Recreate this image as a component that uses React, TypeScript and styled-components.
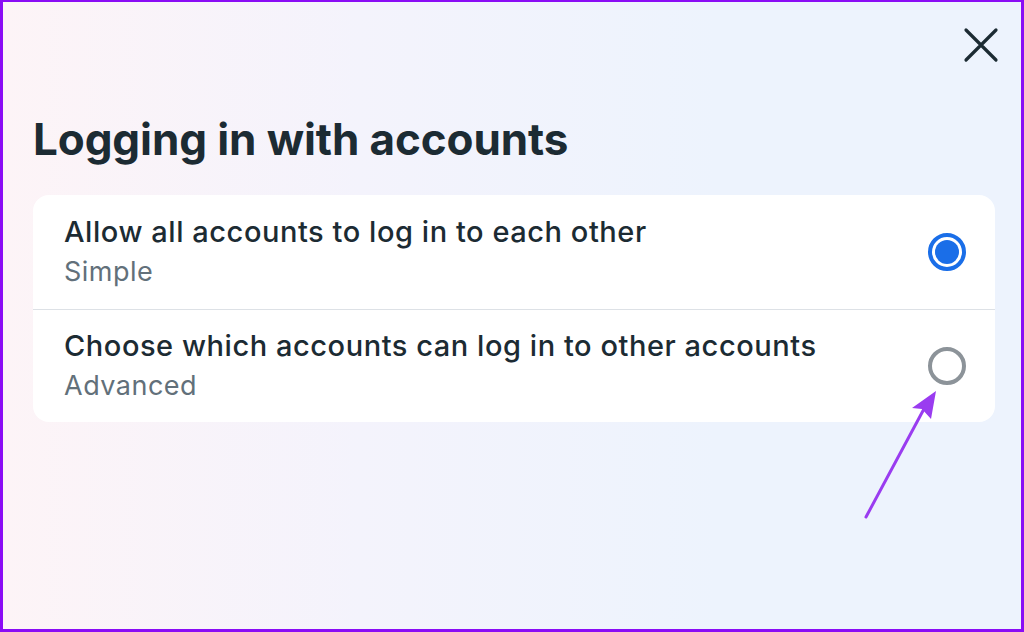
import * as React from "react";
import styled, { createGlobalStyle } from "styled-components";

const GlobalStyle = createGlobalStyle`
  html, body {
    margin: 0;
    padding: 0;
  }
  body {
    font-family: Inter, "Noto Sans", "Liberation Sans", sans-serif;
    color: #1c2b33;
  }
`;

const Frame = styled.div`
  position: relative;
  box-sizing: border-box;
  width: 1024px;
  height: 632px;
  border: 3px solid #8a0cf5;
  border-top-width: 2px;
  background: linear-gradient(90deg, #fdf4f7 0%, #f4f3fc 35%, #edf3fd 70%, #edf3fd 100%);
  padding: 0 26px 0 30px;
  overflow: hidden;
`;

const TopBar = styled.div`
  display: flex;
  justify-content: flex-end;
  height: 107px;
  padding-top: 23px;
  box-sizing: border-box;
`;

const CloseButton = styled.button`
  width: 40px;
  height: 40px;
  margin-right: -6px;
  border: none;
  background: transparent;
  padding: 0;
  display: flex;
  align-items: center;
  justify-content: center;
  cursor: pointer;
`;

const Title = styled.h1`
  margin: 0;
  font-size: 44px;
  font-weight: 700;
  line-height: 60px;
  letter-spacing: -0.1px;
  color: #1c2b33;
`;

const Card = styled.div`
  margin-top: 26px;
  background: #ffffff;
  border-radius: 16px;
  overflow: hidden;
`;

const Row = styled.div<{ $divider?: boolean }>`
  display: flex;
  align-items: center;
  justify-content: space-between;
  height: 113.5px;
  padding: 0 29px 0 31px;
  box-sizing: border-box;
  border-top: ${(p) => (p.$divider ? "1.5px solid #dde1e6" : "none")};
`;

const RowText = styled.div`
  display: flex;
  flex-direction: column;
  gap: 6px;
`;

const RowTitle = styled.div`
  font-size: 29px;
  font-weight: 500;
  line-height: 34px;
  letter-spacing: 0.55px;
  color: #1c2b33;
`;

const RowSub = styled.div`
  font-size: 27px;
  font-weight: 400;
  line-height: 34px;
  letter-spacing: 0.5px;
  color: #62707a;
`;

const Radio = styled.span<{ $checked?: boolean }>`
  box-sizing: border-box;
  width: 38px;
  height: 38px;
  border-radius: 50%;
  border: 4px solid ${(p) => (p.$checked ? "#1a6ee8" : "#8c9399")};
  display: flex;
  align-items: center;
  justify-content: center;
  &::after {
    content: "";
    width: 24px;
    height: 24px;
    border-radius: 50%;
    background: ${(p) => (p.$checked ? "#1a6ee8" : "transparent")};
  }
`;

const Arrow = styled.svg`
  position: absolute;
  left: 852px;
  top: 381px;
  width: 90px;
  height: 140px;
  pointer-events: none;
`;

const options = [
  { title: "Allow all accounts to log in to each other", sub: "Simple", checked: true },
  { title: "Choose which accounts can log in to other accounts", sub: "Advanced", checked: false },
];

export default function App() {
  return (
    <>
      <GlobalStyle />
      <Frame>
        <TopBar>
          <CloseButton aria-label="Close">
            <svg width="36" height="36" viewBox="0 0 36 36">
              <path d="M3 3 L33 33 M33 3 L3 33" stroke="#1c2b33" strokeWidth="3.2" strokeLinecap="round" />
            </svg>
          </CloseButton>
        </TopBar>
        <Title>Logging in with accounts</Title>
        <Card>
          {options.map((o, i) => (
            <Row key={o.sub} $divider={i > 0}>
              <RowText>
                <RowTitle>{o.title}</RowTitle>
                <RowSub>{o.sub}</RowSub>
              </RowText>
              <Radio $checked={o.checked} />
            </Row>
          ))}
        </Card>
        <Arrow viewBox="0 0 90 140">
          <path d="M11 134 L70 24" stroke="#9a3cf0" strokeWidth="3" strokeLinecap="round" fill="none" />
          <path d="M81 8 L57 25 L67 26 L76 36 Z" fill="#9a3cf0" />
        </Arrow>
      </Frame>
    </>
  );
}
